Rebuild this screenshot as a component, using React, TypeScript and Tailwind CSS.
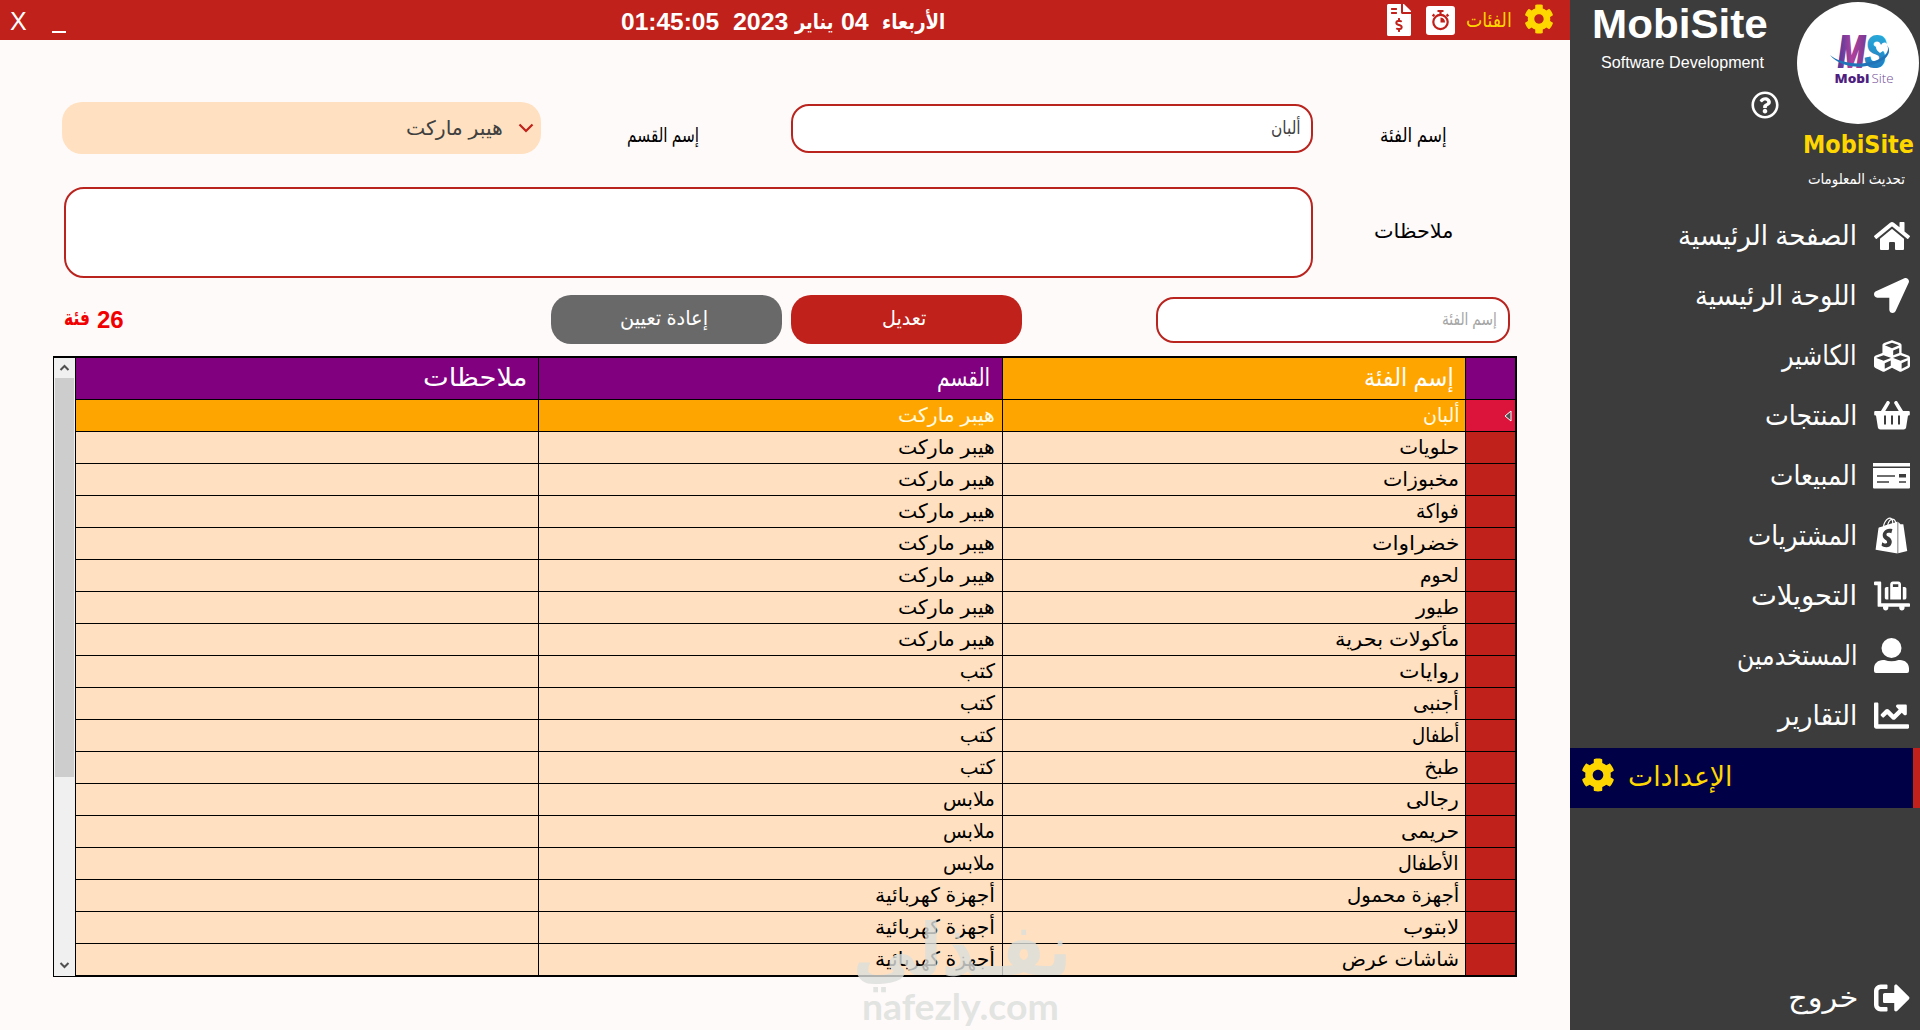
import { useLayoutEffect, useRef, useState } from "react";
import type { ReactNode } from "react";
import {
  FaChartLine,
  FaCog,
  FaCubes,
  FaFileInvoiceDollar,
  FaHome,
  FaLocationArrow,
  FaLuggageCart,
  FaRegQuestionCircle,
  FaShopify,
  FaSignOutAlt,
} from "react-icons/fa";

/** Single line of text whose glyphs are condensed or widened to fill the box. */
function Fit({ className, children, ltr }: { className: string; children: ReactNode; ltr?: boolean }) {
  const box = useRef<HTMLSpanElement>(null);
  const text = useRef<HTMLSpanElement>(null);
  const [scale, setScale] = useState(1);
  useLayoutEffect(() => {
    if (box.current && text.current && text.current.offsetWidth > 0) {
      setScale(box.current.getBoundingClientRect().width / text.current.offsetWidth);
    }
  }, []);
  return (
    <span ref={box} dir={ltr ? "ltr" : "rtl"} className={"block shrink-0 whitespace-nowrap " + className}>
      <span
        ref={text}
        className={"inline-block " + (ltr ? "origin-left" : "origin-right")}
        style={{ transform: `scaleX(${scale})` }}
      >
        {children}
      </span>
    </span>
  );
}

function BasketIcon() {
  return (
    <svg viewBox="0 0 36 29" className="h-[29px] w-[36px]">
      <path d="M14 1.800 8.500 11M22 1.800 27.500 11" stroke="currentColor" strokeWidth="3.600" strokeLinecap="round" />
      <path
        fillRule="evenodd"
        fill="currentColor"
        d="M1.200 10h33.600a1 1 0 0 1 1 1v2.400a1 1 0 0 1-1 1h-.8l-1.900 12a2.600 2.600 0 0 1-2.500 2.200H6.400a2.600 2.600 0 0 1-2.500-2.200L2 14.400h-.8a1 1 0 0 1-1-1V11a1 1 0 0 1 1-1zM10 14.500v9h2v-9zM17 14.500v9h2v-9zM24 14.500v9h2v-9z"
      />
    </svg>
  );
}

function CardIcon() {
  return (
    <svg viewBox="0 0 37 26" className="h-[26px] w-[37px]">
      <path
        fillRule="evenodd"
        fill="currentColor"
        d="M0 0h37v3.500H0zM0 5h37v19.500a1 1 0 0 1-1 1H1a1 1 0 0 1-1-1zM4 12.200v1.600h18v-1.600zM4 18.200v1.600h12v-1.600zM26 11v3.600h7V11zM26 18.200v1.600h7v-1.600z"
      />
    </svg>
  );
}

function PersonIcon() {
  return (
    <svg viewBox="0 0 35 35" className="size-[35px]">
      <circle cx="17.500" cy="10" r="10" fill="currentColor" />
      <path d="M0 33v-2.500C0 25.500 4 22 9 22h1.500c4.500 1.800 9.500 1.800 14 0H26c5 0 9 3.500 9 8.500V33a2 2 0 0 1-2 2H2a2 2 0 0 1-2-2z" fill="currentColor" />
    </svg>
  );
}

const nav = [
  { label: "الصفحة الرئيسية", w: "w-[179px]", icon: <FaHome className="size-[36px]" /> },
  { label: "اللوحة الرئيسية", w: "w-[162px]", icon: <FaLocationArrow className="size-[35px]" /> },
  { label: "الكاشير", w: "w-[75px]", icon: <FaCubes className="size-[36px]" /> },
  { label: "المنتجات", w: "w-[92px]", icon: <BasketIcon /> },
  { label: "المبيعات", w: "w-[87px]", icon: <CardIcon /> },
  { label: "المشتريات", w: "w-[109px]", icon: <FaShopify className="size-[37px]" /> },
  { label: "التحويلات", w: "w-[106px]", icon: <FaLuggageCart className="size-[36px]" /> },
  { label: "المستخدمين", w: "w-[120px]", icon: <PersonIcon /> },
  { label: "التقارير", w: "w-[79px]", icon: <FaChartLine className="size-[35px]" /> },
];

const market = ["هيبر ماركت", "w-[97px]"];
const books = ["كتب", "w-[35px]"];
const clothes = ["ملابس", "w-[52px]"];
const devices = ["أجهزة كهربائية", "w-[120px]"];

const rows: [string, string, string[]][] = [
  ["ألبان", "w-[36px]", market],
  ["حلويات", "w-[60px]", market],
  ["مخبوزات", "w-[76px]", market],
  ["فواكة", "w-[43px]", market],
  ["خضراوات", "w-[87px]", market],
  ["لحوم", "w-[39px]", market],
  ["طيور", "w-[43px]", market],
  ["مأكولات بحرية", "w-[124px]", market],
  ["روايات", "w-[60px]", books],
  ["أجنبى", "w-[46px]", books],
  ["أطفال", "w-[47px]", books],
  ["طبخ", "w-[35px]", books],
  ["رجالى", "w-[53px]", clothes],
  ["حريمى", "w-[58px]", clothes],
  ["الأطفال", "w-[61px]", clothes],
  ["أجهزة محمول", "w-[112px]", devices],
  ["لابتوب", "w-[56px]", devices],
  ["شاشات عرض", "w-[117px]", devices],
];

function StopwatchTile() {
  return (
    <svg viewBox="0 0 29 29" className="h-[29px] w-[29px]">
      <rect width="29" height="29" rx="3" fill="#fff" />
      <g stroke="#c0211a" fill="none" strokeWidth="2.200">
        <circle cx="14.500" cy="16" r="7.200" />
        <path d="M11.500 5h6M14.500 5v3M20.600 8.400l1.800 1.800M6.600 10.200l1.800-1.800" />
      </g>
      <path d="M14.500 16.500v-5a5 5 0 0 1 4.500 5z" fill="#c0211a" />
    </svg>
  );
}

function LogoMark() {
  return (
    <svg viewBox="0 0 122 122" className="h-[122px] w-[122px]">
      <defs>
        <linearGradient id="lm" x1="0" x2="1" y1="0" y2="0">
          <stop offset="0" stopColor="#4b3a9b" />
          <stop offset=".5" stopColor="#b0409c" />
          <stop offset="1" stopColor="#7a3a94" />
        </linearGradient>
        <linearGradient id="ls" x1="0" x2="0" y1="0" y2="1">
          <stop offset="0" stopColor="#2bb5e0" />
          <stop offset="1" stopColor="#1e6fb8" />
        </linearGradient>
      </defs>
      <circle cx="61" cy="61" r="61" fill="#fff" />
      <g fontFamily="Liberation Sans, Arial, sans-serif" fontWeight="700" fontStyle="italic" fontSize="45" strokeWidth="2">
        <text x="41" y="65" textLength="27" lengthAdjust="spacingAndGlyphs" fill="url(#lm)" stroke="url(#lm)">M</text>
        <text x="68" y="65" textLength="21" lengthAdjust="spacingAndGlyphs" fill="url(#ls)" stroke="url(#ls)">S</text>
      </g>
      <path d="M79 45c-1-4 3-5 5-2 2-4 7-3 6 1-1 3-4 5-7 7-2-2-4-3-4-6z" fill="#fff" />
      <path d="M33 53c10 9 38 13 54 1 4-4 5-7 3-11 4 5 2 11-4 15-17 11-43 8-53-5z" fill="#2274b9" />
      <g fontFamily="Open Sans, Noto Sans, sans-serif" fontSize="13">
        <text x="37.500" y="81" fontWeight="800" textLength="35" lengthAdjust="spacingAndGlyphs" fill="#4f1f80">Mobi</text>
        <text x="74.500" y="81" fontWeight="300" textLength="22" lengthAdjust="spacingAndGlyphs" fill="#6f4a96">Site</text>
      </g>
    </svg>
  );
}

function TopBar() {
  return (
    <header className="flex h-10 items-center bg-[#c0211a] text-white">
      <span className="ml-[10px] mt-px text-[25px] leading-10">X</span>
      <span className="ml-[25px] mt-[5px] h-[2px] w-[14px] translate-y-[9px] bg-white" />
      <div className="ml-[555px] flex items-center pt-[4px] text-2xl font-bold leading-9">
        <Fit ltr className="w-[98px]">01:45:05</Fit>
        <Fit ltr className="ml-[14px] w-[55px]">2023</Fit>
        <Fit className="ml-2 w-[38px] text-[21px]">يناير</Fit>
        <Fit ltr className="ml-[7px] w-7">04</Fit>
        <Fit className="ml-[14px] w-[63px] text-[21px]">الأربعاء</Fit>
      </div>
      <div className="ml-auto flex items-center pr-[16px]">
        <FaFileInvoiceDollar className="h-[32px] w-[26px]" />
        <span className="ml-[14px]"><StopwatchTile /></span>
        <Fit className="ml-[11px] w-[46px] text-[20px] leading-10 text-[#ffd700]">الفئات</Fit>
        <FaCog className="ml-[12px] size-[30px] -translate-y-px text-[#ffd700]" />
      </div>
    </header>
  );
}

function EntryForm() {
  return (
    <section>
      <div className="flex h-[52px] items-center pl-[62px] text-black">
        <div className="flex h-[52px] w-[479px] items-center justify-end rounded-[20px] bg-[#ffe0c0] pr-[7px]">
          <Fit className="w-[97px] text-[20px] leading-[48px] text-[#404040]">هيبر ماركت</Fit>
          <svg viewBox="0 0 16 10" className="ml-[15px] h-[10px] w-[16px]">
            <path d="M1.500 1.500 8 8l6.500-6.500" fill="none" stroke="#c0211a" strokeWidth="2.200" />
          </svg>
        </div>
        <Fit className="ml-[86px] mt-[14px] w-[72px] text-[20px]">إسم القسم</Fit>
        <div className="ml-[92px] flex h-[49px] w-[522px] items-center justify-end rounded-[18px] border-2 border-[#b9241f] bg-white pr-[10px]">
          <Fit className="w-[30px] text-[18px] leading-[44px] text-[#404040]">ألبان</Fit>
        </div>
        <Fit className="ml-[67px] mt-[14px] w-[67px] text-[20px]">إسم الفئة</Fit>
      </div>

      <div className="mt-[33px] flex h-[91px] items-center pl-[64px] text-black">
        <div className="h-[91px] w-[1249px] rounded-[20px] border-2 border-[#b9241f] bg-white" />
        <Fit className="ml-[61px] w-[79px] -translate-y-[2px] text-[20px]">ملاحظات</Fit>
      </div>

      <div className="mt-[17px] flex h-[49px] items-center pl-[64px] text-white">
        <div className="flex items-center font-bold text-[#f00000]">
          <Fit className="w-[26px] -translate-y-[2px] text-[21px]">فئة</Fit>
          <Fit ltr className="ml-[7px] w-[27px] text-2xl">26</Fit>
        </div>
        <button className="ml-[427px] flex h-[49px] w-[231px] items-center justify-center rounded-[20px] bg-[#696969] pb-[3px] pr-[4px]">
          <Fit className="w-[88px] text-[20px]">إعادة تعيين</Fit>
        </button>
        <button className="ml-[9px] flex h-[49px] w-[231px] items-center justify-center rounded-[20px] bg-[#c0211a] pb-[3px] pr-[4px]">
          <Fit className="w-[44px] text-[20px]">تعديل</Fit>
        </button>
        <div className="ml-[134px] flex h-[46px] w-[354px] items-center justify-end rounded-[18px] border-2 border-[#b9241f] bg-white pr-[11px]">
          <Fit className="w-[55px] text-[17px] text-[#a5a5a5]">إسم الفئة</Fit>
        </div>
      </div>
    </section>
  );
}

function ScrollBar() {
  return (
    <div className="flex w-[21px] flex-col items-center bg-[#f0f0f0]">
      <svg viewBox="0 0 21 20" className="h-5 w-[21px]">
        <path d="M6.500 12l4-4 4 4" fill="none" stroke="#505050" strokeWidth="2" />
      </svg>
      <div className="h-[399px] w-[19px] bg-[#cdcdcd]" />
      <svg viewBox="0 0 21 20" className="mt-auto h-5 w-[21px]">
        <path d="M6.500 7l4 4 4-4" fill="none" stroke="#505050" strokeWidth="2" />
      </svg>
    </div>
  );
}

function CategoryTable() {
  return (
    <section className="ml-[53px] mt-[12px] flex h-[621px] w-[1464px] border border-r-2 border-t-2 border-black">
      <ScrollBar />
      <div className="flex-1 border-l border-black">
        <div className="grid h-[42px] grid-cols-[463px_464px_463px_1fr] border-b border-black bg-[#800080] text-[25px] leading-[38px] text-white">
          <div className="flex justify-end border-r border-black pr-[11px]">
            <Fit className="w-[104px]">ملاحظات</Fit>
          </div>
          <div className="flex justify-end border-r border-black pr-[12px]">
            <Fit className="w-[53px]">القسم</Fit>
          </div>
          <div className="flex justify-end border-r border-black bg-[#ffa500] pr-[11px]">
            <Fit className="w-[90px]">إسم الفئة</Fit>
          </div>
          <div />
        </div>
        {rows.map(([name, width, [dept, deptWidth]], i) => (
          <div
            key={name}
            className={
              "grid h-8 grid-cols-[463px_464px_463px_1fr] border-b border-black text-[20px] leading-[30px] " +
              (i === 0 ? "bg-[#ffa500] text-[#fffbe0]" : "bg-[#ffe0c0] text-black")
            }
          >
            <div className="border-r border-black" />
            <div className="flex justify-end border-r border-black pr-[7px]">
              <Fit className={deptWidth}>{dept}</Fit>
            </div>
            <div className="flex justify-end border-r border-black pr-[6px]">
              <Fit className={width}>{name}</Fit>
            </div>
            <div className={"flex items-center justify-end pr-[3px] " + (i === 0 ? "bg-[#dc143c]" : "bg-[#c0211a]")}>
              {i === 0 && (
                <svg viewBox="0 0 8 12" className="h-3 w-2">
                  <path d="M7 1v10L1 6z" fill="#505050" stroke="#fff" strokeWidth="1" />
                </svg>
              )}
            </div>
          </div>
        ))}
      </div>
    </section>
  );
}

function Sidebar() {
  return (
    <aside className="flex w-[350px] flex-col bg-[#3c3c3c] text-white">
      <div className="flex h-[208px]">
        <div className="w-[227px] pl-[22px]">
          <Fit ltr className="w-[176px] text-[41px] font-bold leading-[49px]">MobiSite</Fit>
          <Fit ltr className="ml-[9px] w-[163px] text-[17px] leading-7">Software Development</Fit>
          <FaRegQuestionCircle className="ml-[159px] mt-[14px] size-[28px]" />
        </div>
        <div className="flex w-[123px] flex-col items-start pt-[2px]">
          <LogoMark />
          <Fit ltr className="ml-[6px] mt-[2px] w-[111px] font-['DejaVu_Sans'] text-[25px] font-bold leading-[38px] text-[#ffd700]">MobiSite</Fit>
          <Fit className="ml-[11px] w-[97px] text-[15px] leading-[30px]">تحديث المعلومات</Fit>
        </div>
      </div>
      <nav>
        {nav.map((n) => (
          <a key={n.label} className="flex h-[60px] items-center justify-end pb-[5px] pr-[9px]">
            <Fit className={n.w + " text-[28px] leading-[55px]"}>{n.label}</Fit>
            <span className="ml-[16px] mr-px flex w-[37px] justify-center">{n.icon}</span>
          </a>
        ))}
        <a className="flex h-[60px] items-center border-r-[7px] border-[#c0211a] bg-[#000046] pb-[3px] pl-[11px] text-[#ffd700]">
          <FaCog className="size-[34px] -translate-y-[2px]" />
          <Fit className="ml-[13px] w-[105px] text-[28px] leading-[57px]">الإعدادات</Fit>
        </a>
      </nav>
      <a className="mb-[2px] mt-auto flex h-[60px] items-center justify-end pb-px pr-[10px]">
        <Fit className="w-[70px] text-[28px] leading-[56px]">خروج</Fit>
        <FaSignOutAlt className="ml-[16px] size-[36px]" />
      </a>
    </aside>
  );
}

export default function App() {
  return (
    <div className="relative flex h-[1030px] w-[1920px] overflow-hidden bg-[#fffafa] font-['Liberation_Sans','DejaVu_Sans',sans-serif]">
      <main className="w-[1570px]">
        <TopBar />
        <div className="pt-[62px]">
          <EntryForm />
          <CategoryTable />
        </div>
      </main>
      <Sidebar />
      <div className="pointer-events-none absolute left-[853px] top-[905px] font-bold text-[#dcdfdc] opacity-80">
        <Fit className="w-[218px] text-[72px] leading-[90px]">نفـذلي</Fit>
        <Fit ltr className="ml-[9px] mt-[-8px] w-[197px] font-[Lato] text-[37px] leading-[38px]">nafezly.com</Fit>
      </div>
    </div>
  );
}
